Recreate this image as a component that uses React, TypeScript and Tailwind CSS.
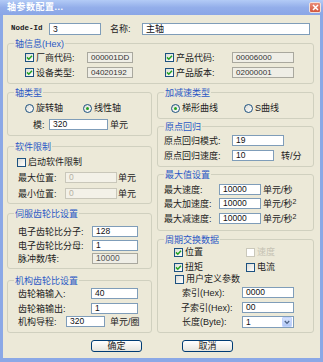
import React from "react";

type Kind = "n" | "r" | "d";

function Inp({ v, cls, kind = "n" }: { v: string; cls: string; kind?: Kind }) {
  const k =
    kind === "n"
      ? "border-[#7f9db9] bg-white text-[#111]"
      : kind === "r"
      ? "border-[#a9a89e] bg-[#efeee6] text-[#333]"
      : "border-[#c9c7ba] bg-[#f3f1e8] text-[#b5b2a4]";
  return (
    <div className={`h-[11px] shrink-0 border ${k} pl-[3px] flex items-center text-[8.5px] leading-none overflow-hidden ${cls}`}>
      {v}
    </div>
  );
}

function Check({ on, dis }: { on?: boolean; dis?: boolean }) {
  return (
    <div
      className={`w-[9px] h-[9px] shrink-0 border flex items-center justify-center ${
        dis ? "border-[#cac8bb] bg-white" : "border-[#1c5180] bg-gradient-to-br from-[#dcdcd5] to-white"
      }`}
    >
      {on && (
        <svg width="7" height="7" viewBox="0 0 7 7">
          <path d="M1 3.4 L2.8 5.2 L6 1.8" stroke="#21a121" strokeWidth="1.5" fill="none" />
        </svg>
      )}
    </div>
  );
}

function Radio({ on }: { on?: boolean }) {
  return (
    <div className="w-[9px] h-[9px] shrink-0 rounded-full border border-[#1c5180] bg-gradient-to-br from-[#dcdcd5] to-white flex items-center justify-center">
      {on && <div className="w-[3px] h-[3px] rounded-full bg-[#21a121]" />}
    </div>
  );
}

function Group({ label, cls, children }: { label: string; cls: string; children: React.ReactNode }) {
  return (
    <div className={`border border-[#d0d0bf] rounded-[3px] ${cls}`}>
      <div className="-mt-[5px] ml-[6px] w-fit px-[1px] bg-[#ece9d8] h-[10px] leading-[10px] text-[9px] text-[#2a58c5] whitespace-nowrap">
        {label}
      </div>
      {children}
    </div>
  );
}

function T({ cls = "", children }: { cls?: string; children: React.ReactNode }) {
  return <div className={`shrink-0 text-[9px] leading-[10px] whitespace-nowrap text-[#222] ${cls}`}>{children}</div>;
}

function Btn({ label }: { label: string }) {
  return (
    <div className="w-[51px] h-[12px] shrink-0 rounded-[3px] border border-[#003c74] bg-gradient-to-b from-white to-[#e6e5de] flex items-center justify-center text-[9px] leading-none text-[#222]">
      {label}
    </div>
  );
}

export default function App() {
  return (
    <div className="w-[323px] h-[362px] bg-[#8ba8e6] flex flex-col font-[Liberation_Sans,Noto_Sans_CJK_SC,sans-serif] overflow-hidden">
      {/* title bar */}
      <div className="h-[15px] shrink-0 bg-gradient-to-b from-[#b3cbf6] via-[#93aeea] to-[#8aa6e6] flex items-center pl-[7px] pr-[2px]">
        <div className="text-[9px] leading-none font-bold text-white tracking-[0.5px]">轴参数配置...</div>
        <div className="ml-auto w-[12px] h-[11px] rounded-[2px] border border-[#f0e0dc] bg-gradient-to-b from-[#e98c78] to-[#d2573f] flex items-center justify-center">
          <svg width="7" height="7" viewBox="0 0 7 7">
            <path d="M1 1 L6 6 M6 1 L1 6" stroke="white" strokeWidth="1.5" />
          </svg>
        </div>
      </div>

      {/* body */}
      <div className="flex-1 mx-[3px] mb-[4px] bg-[#ece9d8] pl-[4px] pr-[6px] flex flex-col">
        {/* row 1 */}
        <div className="mt-[8px] h-[12px] flex items-center pl-[4px]">
          <div className="w-[38px] shrink-0 font-[Liberation_Mono,monospace] font-bold text-[7.5px] leading-none text-[#222]">Node-Id</div>
          <Inp v="3" cls="w-[52px] h-[12px]" />
          <T cls="ml-[9px] w-[32px]">名称:</T>
          <Inp v="主轴" cls="w-[168px] h-[12px] text-[9px]" />
        </div>

        {/* 轴信息 */}
        <Group label="轴信息(Hex)" cls="mt-[8px] pb-[5px]">
          <div className="mt-[3px] h-[11px] flex items-center pl-[17px]">
            <Check on />
            <T cls="ml-[2px] w-[51px]">厂商代码:</T>
            <Inp v="000001DD" kind="r" cls="w-[46px] text-[8px] pl-[2px]" />
            <div className="ml-[32px]">
              <Check on />
            </div>
            <T cls="ml-[2px] w-[56px]">产品代码:</T>
            <Inp v="00006000" kind="r" cls="w-[62px] text-[8px]" />
          </div>
          <div className="mt-[4px] h-[11px] flex items-center pl-[17px]">
            <Check on />
            <T cls="ml-[2px] w-[51px]">设备类型:</T>
            <Inp v="04020192" kind="r" cls="w-[46px] text-[8px] pl-[2px]" />
            <div className="ml-[32px]">
              <Check on />
            </div>
            <T cls="ml-[2px] w-[56px]">产品版本:</T>
            <Inp v="02000001" kind="r" cls="w-[62px] text-[8px]" />
          </div>
        </Group>

        {/* columns */}
        <div className="mt-[8px] flex gap-[5px]">
          {/* left */}
          <div className="w-[145px] shrink-0 flex flex-col">
            <Group label="轴类型" cls="pb-[5px]">
              <div className="mt-[5px] h-[10px] flex items-center pl-[17px]">
                <Radio />
                <T cls="ml-[2px] w-[47px]">旋转轴</T>
                <Radio on />
                <T cls="ml-[2px]">线性轴</T>
              </div>
              <div className="mt-[6px] h-[11px] flex items-center pl-[25px]">
                <T cls="w-[16px]">模:</T>
                <Inp v="320" cls="w-[59px]" />
                <T cls="ml-[2px]">单元</T>
              </div>
            </Group>

            <Group label="软件限制" cls="mt-[10px] pb-[4px]">
              <div className="mt-[5px] h-[10px] flex items-center pl-[9px]">
                <Check />
                <T cls="ml-[2px]">启动软件限制</T>
              </div>
              <div className="mt-[5px] h-[11px] flex items-center pl-[10px]">
                <T cls="w-[47px]">最大位置:</T>
                <Inp v="0" kind="d" cls="w-[52px]" />
                <T cls="ml-[1px]">单元</T>
              </div>
              <div className="mt-[5px] h-[11px] flex items-center pl-[10px]">
                <T cls="w-[47px]">最小位置:</T>
                <Inp v="0" kind="d" cls="w-[52px]" />
                <T cls="ml-[1px]">单元</T>
              </div>
            </Group>

            <Group label="伺服齿轮比设置" cls="mt-[9px] pb-[4px]">
              <div className="mt-[7px] h-[11px] flex items-center pl-[10px]">
                <T cls="w-[74px]">电子齿轮比分子:</T>
                <Inp v="128" cls="w-[46px]" />
              </div>
              <div className="mt-[3px] h-[11px] flex items-center pl-[10px]">
                <T cls="w-[74px]">电子齿轮比分母:</T>
                <Inp v="1" cls="w-[46px]" />
              </div>
              <div className="mt-[2px] h-[11px] flex items-center pl-[10px]">
                <T cls="w-[74px]">脉冲数/转:</T>
                <Inp v="10000" kind="r" cls="w-[46px] text-[#555]" />
              </div>
            </Group>

            <Group label="机构齿轮比设置" cls="mt-[11px] pb-[5px]">
              <div className="mt-[2px] h-[11px] flex items-center pl-[10px]">
                <T cls="w-[73px]">齿轮箱输入:</T>
                <Inp v="40" cls="w-[47px]" />
              </div>
              <div className="mt-[4px] h-[11px] flex items-center pl-[10px]">
                <T cls="w-[73px]">齿轮箱输出:</T>
                <Inp v="1" cls="w-[47px]" />
              </div>
              <div className="mt-[2px] h-[11px] flex items-center pl-[10px]">
                <T cls="w-[48px]">机构导程:</T>
                <Inp v="320" cls="w-[39px]" />
                <T cls="ml-[5px]">单元/圈</T>
              </div>
            </Group>
          </div>

          {/* right */}
          <div className="w-[157px] shrink-0 flex flex-col">
            <Group label="加减速类型" cls="pb-[5px]">
              <div className="mt-[5px] h-[10px] flex items-center pl-[13px]">
                <Radio on />
                <T cls="ml-[2px] w-[62px]">梯形曲线</T>
                <Radio />
                <T cls="ml-[2px]">S曲线</T>
              </div>
            </Group>

            <Group label="原点回归" cls="mt-[7px] pb-[5px]">
              <div className="mt-[3px] h-[11px] flex items-center pl-[6px]">
                <T cls="w-[68px]">原点回归模式:</T>
                <Inp v="19" cls="w-[52px]" />
              </div>
              <div className="mt-[4px] h-[11px] flex items-center pl-[6px]">
                <T cls="w-[68px]">原点回归速度:</T>
                <Inp v="10" cls="w-[42px]" />
                <T cls="ml-[7px]">转/分</T>
              </div>
            </Group>

            <Group label="最大值设置" cls="mt-[7px] pb-[6px]">
              <div className="mt-[4px] h-[11px] flex items-center pl-[6px]">
                <T cls="w-[55px]">最大速度:</T>
                <Inp v="10000" cls="w-[42px]" />
                <T cls="ml-[2px]">单元/秒</T>
              </div>
              <div className="mt-[3px] h-[11px] flex items-center pl-[6px]">
                <T cls="w-[55px]">最大加速度:</T>
                <Inp v="10000" cls="w-[42px]" />
                <T cls="ml-[2px]">
                  单元/秒<sup className="text-[7px] -top-[3px]">2</sup>
                </T>
              </div>
              <div className="mt-[4px] h-[11px] flex items-center pl-[6px]">
                <T cls="w-[55px]">最大减速度:</T>
                <Inp v="10000" cls="w-[42px]" />
                <T cls="ml-[2px]">
                  单元/秒<sup className="text-[7px] -top-[3px]">2</sup>
                </T>
              </div>
            </Group>

            <Group label="周期交换数据" cls="mt-[8px] pb-[4px]">
              <div className="mt-[2px] h-[10px] flex items-center pl-[16px]">
                <Check on />
                <T cls="ml-[2px] w-[61px]">位置</T>
                <Check dis />
                <T cls="ml-[2px] text-[#c5c2b4]">速度</T>
              </div>
              <div className="mt-[5px] h-[10px] flex items-center pl-[16px]">
                <Check on />
                <T cls="ml-[2px] w-[61px]">扭矩</T>
                <Check />
                <T cls="ml-[2px]">电流</T>
              </div>
              <div className="mt-[2px] h-[10px] flex items-center pl-[17px]">
                <Check />
                <T cls="ml-[2px]">用户定义参数</T>
              </div>
              <div className="mt-[3px] h-[11px] flex items-center pl-[24px]">
                <T cls="w-[60px]">索引(Hex):</T>
                <Inp v="0000" cls="w-[52px]" />
              </div>
              <div className="mt-[4px] h-[11px] flex items-center pl-[23px]">
                <T cls="w-[61px]">子索引(Hex):</T>
                <Inp v="00" cls="w-[52px]" />
              </div>
              <div className="mt-[3px] h-[12px] flex items-center pl-[24px]">
                <T cls="w-[60px]">长度(Byte):</T>
                <div className="w-[52px] h-[12px] shrink-0 border border-[#7f9db9] bg-white flex items-center pl-[3px] pr-[1px] text-[8.5px] leading-none text-[#111]">
                  1
                  <div className="ml-auto w-[10px] h-[10px] rounded-[1px] bg-gradient-to-b from-[#d6e2fc] to-[#b0c8f6] border border-[#c3d3fd] flex items-center justify-center">
                    <svg width="6" height="5" viewBox="0 0 6 5">
                      <path d="M0.8 1 L3 3.4 L5.2 1" stroke="#4d6185" strokeWidth="1.3" fill="none" />
                    </svg>
                  </div>
                </div>
              </div>
            </Group>
          </div>
        </div>

        {/* buttons */}
        <div className="mt-[7px] flex pl-[84px]">
          <Btn label="确定" />
          <div className="ml-[40px]">
            <Btn label="取消" />
          </div>
        </div>
      </div>
    </div>
  );
}
